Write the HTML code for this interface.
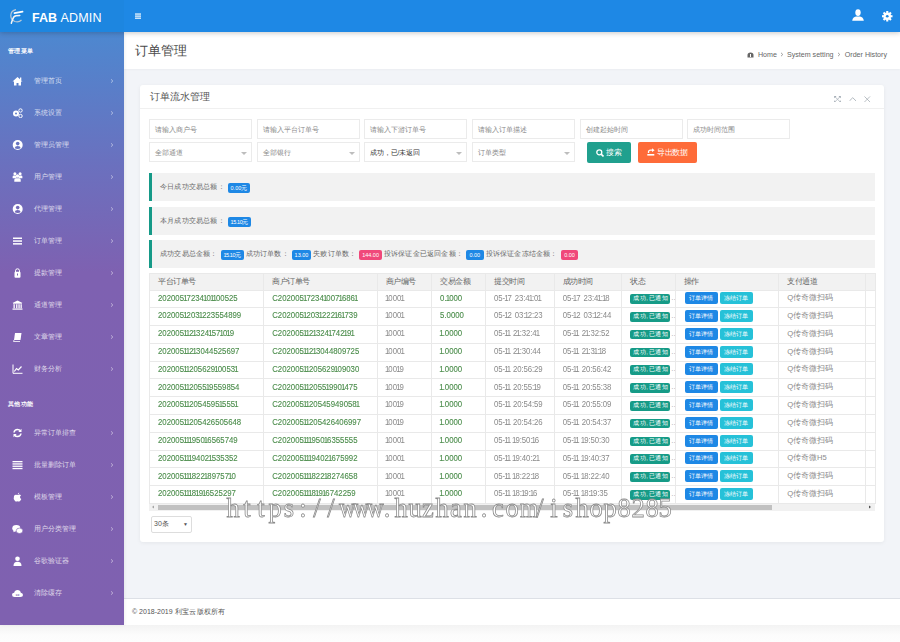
<!DOCTYPE html>
<html><head><meta charset="utf-8">
<style>
*{margin:0;padding:0;box-sizing:border-box}
html,body{width:900px;height:642px;overflow:hidden;background:#fff;font-family:"Liberation Sans",sans-serif;}
#hdr{position:absolute;left:0;top:0;width:900px;height:32.4px;background:#1e88e5;box-shadow:0 1px 5px rgba(0,0,0,.22);z-index:5}
#logo{position:absolute;left:0;top:0;width:124px;height:32.4px;background:#1d86e0}
#side{position:absolute;left:0;top:32px;width:124px;height:593px;box-shadow:1px 0 3px rgba(0,0,0,.06);background:linear-gradient(to bottom,#4d88d0 0px,#6b70be 135px,#7e61b1 240px,#7f61b0 593px);z-index:3}
#main{position:absolute;left:124px;top:32px;width:776px;height:593px;background:#f2f4f8}
#below{position:absolute;left:0;top:625px;width:900px;height:17px;background:linear-gradient(#f3f3f3,#fcfcfc 60%,#fdfdfd)}
.sh{position:absolute;left:8px;font-size:6px;letter-spacing:.4px;font-weight:bold;color:#fff;line-height:8px;white-space:nowrap}
.it{position:absolute;left:0;width:124px;height:16px;color:rgba(255,255,255,.75);font-size:7px;line-height:16px;white-space:nowrap}
.it .t{position:absolute;left:33.8px;top:0}
.it .ar{position:absolute;left:109px;top:4px;width:6px;height:8px}
.it svg.ic{position:absolute;left:12px;top:3px;width:11px;height:10px}

.pg{position:absolute;white-space:nowrap}
#tbar{position:absolute;left:124px;top:32px;width:776px;height:37px;background:#fff;box-shadow:0 1px 2px rgba(0,0,0,.03)}
#card{position:absolute;left:140px;top:85px;width:744px;height:456.5px;background:#fff;border-radius:3px;box-shadow:0 1px 4px rgba(0,0,0,.06)}
.inp{position:absolute;height:20px;width:103px;border:1px solid #ebebeb;background:#fff;font-size:7px;line-height:19px;color:#888;padding-left:4.5px;white-space:nowrap}
.inp .tri{position:absolute;right:4.5px;top:8.5px;width:0;height:0;border-left:3px solid transparent;border-right:3px solid transparent;border-top:3px solid #bdbdbd}
.btn{position:absolute;height:21px;color:#fff;font-size:8px;letter-spacing:-.4px;line-height:21px;text-align:center;border-radius:2px;white-space:nowrap}
.alert{position:absolute;left:149px;width:726px;background:#f2f2f2;border-left:3px solid #169a88;font-size:7px;letter-spacing:.2px;color:#666;white-space:nowrap}
.alert .in{position:absolute;left:8px;top:0;line-height:28px;height:28px}
.bd{display:inline-block;color:#fff;font-size:5.5px;line-height:10.6px;height:10.6px;padding:0 2.8px;border-radius:2px;vertical-align:top;margin:9.5px 2px 0 3px;letter-spacing:0}
#tbl{position:absolute;left:149px;top:273px;width:726px;border-collapse:collapse;table-layout:fixed}
#tbl td,#tbl th{border:1px solid #e9e9e9;height:17.8px;padding:0 0 0 8px;font-size:7.2px;font-weight:normal;text-align:left;white-space:nowrap;overflow:hidden;color:#8a8a8a}
#tbl th{background:#f2f2f2;color:#666;height:16.5px;font-size:8px;letter-spacing:-.5px}
#tbl td.g{color:#4a8c4a}
#tbl td{font-size:7.8px;letter-spacing:0;padding-bottom:1.5px}
#tbl td.tm{letter-spacing:-.1px}
.sy{display:inline-block;transform:scaleY(1.15);transform-origin:50% 55%}
#tbl td.g .sy{-webkit-text-stroke:.1px currentColor}
.sp{display:inline-block;width:3px}
#tbl td.nc{font-size:7.6px;letter-spacing:0}
.o{font-weight:normal;margin:0 -.9px}
.st{display:inline-block;position:relative;top:0.8px;vertical-align:middle;background:#169b87;color:#fff;font-size:6px;line-height:9.5px;height:9.5px;padding:0 0 0 3px;letter-spacing:.5px;border-radius:2px;width:40px;overflow:hidden}
.ob{display:inline-block;color:#fff;font-size:5.8px;line-height:12px;height:12px;width:33px;text-align:center;border-radius:2px;margin-right:2px;vertical-align:1px;letter-spacing:0}
</style></head><body>
<div id="hdr"><div id="logo">
<svg style="position:absolute;left:6px;top:6px" width="22" height="22" viewBox="0 0 22 22"><path d="M10 3.6 Q5 4.5 4.8 9.5 Q4.8 14 9 15.5 Q13 16.5 15.5 14" stroke="#c9cfd6" stroke-width="1.2" fill="none" opacity=".9"/><path d="M8.4 7.1 L16.6 5.6" stroke="#fff" stroke-width="1.6" stroke-linecap="round"/><path d="M5.3 17.3 Q6.5 13 7.8 11 Q8.6 10 10 9.7 L13.8 9.4" stroke="#f4f6f8" stroke-width="1.5" fill="none" stroke-linecap="round"/></svg>
<div style="position:absolute;left:32px;top:10.5px;font-size:12.5px;line-height:14px;color:#fff;white-space:nowrap"><b>FAB</b> <span style="letter-spacing:.2px">ADMIN</span></div>
</div>
<svg style="position:absolute;left:134.7px;top:13px" width="6.3" height="6.3" viewBox="0 0 7 6"><rect x="0" y="0" width="7" height="1.3" fill="#fff"/><rect x="0" y="2.3" width="7" height="1.3" fill="#fff"/><rect x="0" y="4.6" width="7" height="1.3" fill="#fff"/></svg>
<svg style="position:absolute;left:852px;top:9px" width="12" height="12" viewBox="0 0 12 12"><ellipse cx="6" cy="3.6" rx="2.7" ry="3.4" fill="#fff"/><path d="M0.2 11.8 Q0.8 8.2 4 7.6 L8 7.6 Q11.2 8.2 11.8 11.8 Z" fill="#fff"/></svg>
<svg style="position:absolute;left:882px;top:11px" width="10.5" height="10.5" viewBox="0 0 10 10"><g fill="#fff"><circle cx="5" cy="5" r="3.6"/><rect x="4" y="0" width="2" height="10"/><rect x="0" y="4" width="10" height="2"/><rect x="4" y="0" width="2" height="10" transform="rotate(45 5 5)"/><rect x="4" y="0" width="2" height="10" transform="rotate(-45 5 5)"/></g><circle cx="5" cy="5" r="1.3" fill="#1e88e5"/></svg>
</div>
<div id="side"><div class="sh" style="top:15px">管理菜单</div><div class="sh" style="top:368px">其他功能</div><div class="it" style="top:41px"><svg class="ic" viewBox="0 0 11 10"><path d="M5.5 1 L10.5 5.5 L9 5.5 L9 9.5 L6.5 9.5 L6.5 7 L4.5 7 L4.5 9.5 L2 9.5 L2 5.5 L0.5 5.5 Z" fill="#fff"/><rect x="8" y="1.5" width="1.3" height="2.5" fill="#fff"/></svg><span class="t">管理首页</span><svg class="ar" viewBox="0 0 6 8"><path d="M2 2.3 L3.8 4 L2 5.7" stroke="rgba(255,255,255,.55)" stroke-width="0.9" fill="none"/></svg></div><div class="it" style="top:73px"><svg class="ic" viewBox="0 0 11 10"><circle cx="4" cy="5.5" r="3" fill="#fff"/><circle cx="4" cy="5.5" r="1" fill="#6080c8"/><circle cx="8.5" cy="2.5" r="1.7" fill="none" stroke="#fff" stroke-width="1"/><circle cx="8.5" cy="8" r="1.7" fill="none" stroke="#fff" stroke-width="1"/></svg><span class="t">系统设置</span><svg class="ar" viewBox="0 0 6 8"><path d="M2 2.3 L3.8 4 L2 5.7" stroke="rgba(255,255,255,.55)" stroke-width="0.9" fill="none"/></svg></div><div class="it" style="top:105px"><svg class="ic" viewBox="0 0 11 10"><mask id="mk145"><rect width="11" height="10" fill="#fff"/><circle cx="5.7" cy="3.6" r="1.8" fill="#000"/><path d="M2.7 8.3 Q2.9 6.1 5.7 6.1 Q8.5 6.1 8.7 8.3 Q5.7 9.6 2.7 8.3Z" fill="#000"/></mask><circle cx="5.7" cy="5" r="5" fill="#fff" mask="url(#mk145)"/></svg><span class="t">管理员管理</span><svg class="ar" viewBox="0 0 6 8"><path d="M2 2.3 L3.8 4 L2 5.7" stroke="rgba(255,255,255,.55)" stroke-width="0.9" fill="none"/></svg></div><div class="it" style="top:137px"><svg class="ic" viewBox="0 0 11 10"><g fill="#fff"><circle cx="2.9" cy="1.8" r="1.5"/><circle cx="8.1" cy="1.8" r="1.5"/><path d="M0.6 6.3 L0.6 4.8 Q0.6 3.5 2 3.5 L3.8 3.5 L4.6 6.3Z"/><path d="M10.4 6.3 L10.4 4.8 Q10.4 3.5 9 3.5 L7.2 3.5 L6.4 6.3Z"/><circle cx="5.5" cy="4" r="1.7"/><path d="M2.3 9.8 L2.3 7.8 Q2.3 6.2 4 6.2 L7 6.2 Q8.7 6.2 8.7 7.8 L8.7 9.8Z"/></g></svg><span class="t">用户管理</span><svg class="ar" viewBox="0 0 6 8"><path d="M2 2.3 L3.8 4 L2 5.7" stroke="rgba(255,255,255,.55)" stroke-width="0.9" fill="none"/></svg></div><div class="it" style="top:169px"><svg class="ic" viewBox="0 0 11 10"><mask id="mk209"><rect width="11" height="10" fill="#fff"/><circle cx="5.7" cy="3.6" r="1.8" fill="#000"/><path d="M2.7 8.3 Q2.9 6.1 5.7 6.1 Q8.5 6.1 8.7 8.3 Q5.7 9.6 2.7 8.3Z" fill="#000"/></mask><circle cx="5.7" cy="5" r="5" fill="#fff" mask="url(#mk209)"/></svg><span class="t">代理管理</span><svg class="ar" viewBox="0 0 6 8"><path d="M2 2.3 L3.8 4 L2 5.7" stroke="rgba(255,255,255,.55)" stroke-width="0.9" fill="none"/></svg></div><div class="it" style="top:201px"><svg class="ic" viewBox="0 0 11 10"><rect x="1" y="1.5" width="9" height="1.5" fill="#fff"/><rect x="1" y="4.3" width="9" height="1.5" fill="#fff"/><rect x="1" y="7.1" width="9" height="1.5" fill="#fff"/></svg><span class="t">订单管理</span><svg class="ar" viewBox="0 0 6 8"><path d="M2 2.3 L3.8 4 L2 5.7" stroke="rgba(255,255,255,.55)" stroke-width="0.9" fill="none"/></svg></div><div class="it" style="top:233px"><svg class="ic" viewBox="0 0 11 10"><path d="M3.5 4 L3.5 2.8 Q3.5 0.8 5.5 0.8 Q7.5 0.8 7.5 2.8 L7.5 4" stroke="#fff" stroke-width="1" fill="none"/><rect x="2.5" y="3.8" width="6" height="6" rx="1" fill="#fff"/><rect x="5" y="5.5" width="1" height="2" fill="#7a63b3"/></svg><span class="t">提款管理</span><svg class="ar" viewBox="0 0 6 8"><path d="M2 2.3 L3.8 4 L2 5.7" stroke="rgba(255,255,255,.55)" stroke-width="0.9" fill="none"/></svg></div><div class="it" style="top:265px"><svg class="ic" viewBox="0 0 11 10"><path d="M5.5 0.5 L10.5 3 L0.5 3 Z" fill="#fff"/><rect x="1" y="3.3" width="9" height="0.8" fill="#fff"/><rect x="1.5" y="4.3" width="1.3" height="4" fill="#fff"/><rect x="4.1" y="4.3" width="1.3" height="4" fill="#fff"/><rect x="6.4" y="4.3" width="1.3" height="4" fill="#fff"/><rect x="8.5" y="4.3" width="1.3" height="4" fill="#fff"/><rect x="0.5" y="8.5" width="10" height="1.2" fill="#fff"/></svg><span class="t">通道管理</span><svg class="ar" viewBox="0 0 6 8"><path d="M2 2.3 L3.8 4 L2 5.7" stroke="rgba(255,255,255,.55)" stroke-width="0.9" fill="none"/></svg></div><div class="it" style="top:297px"><svg class="ic" viewBox="0 0 11 10"><path d="M3 1 L9.5 1 L8.5 8 L2 8 Z" fill="#fff"/><path d="M2 8 L1.5 9.5 L8 9.5" stroke="#fff" stroke-width="0.8" fill="none"/></svg><span class="t">文章管理</span><svg class="ar" viewBox="0 0 6 8"><path d="M2 2.3 L3.8 4 L2 5.7" stroke="rgba(255,255,255,.55)" stroke-width="0.9" fill="none"/></svg></div><div class="it" style="top:329px"><svg class="ic" viewBox="0 0 11 10"><path d="M1 0.5 L1 9.3 L10.5 9.3" stroke="#fff" stroke-width="1" fill="none"/><path d="M2.3 7.5 L4.5 4.5 L6.3 6 L9.5 2.5" stroke="#fff" stroke-width="1.2" fill="none"/></svg><span class="t">财务分析</span><svg class="ar" viewBox="0 0 6 8"><path d="M2 2.3 L3.8 4 L2 5.7" stroke="rgba(255,255,255,.55)" stroke-width="0.9" fill="none"/></svg></div><div class="it" style="top:393px"><svg class="ic" viewBox="0 0 11 10"><path d="M2 4.5 Q2.5 1.5 5.5 1.5 Q7.5 1.5 8.5 3" stroke="#fff" stroke-width="1.5" fill="none"/><path d="M9.5 0.8 L9.5 4 L6.3 4Z" fill="#fff"/><path d="M9 5.5 Q8.5 8.5 5.5 8.5 Q3.5 8.5 2.5 7" stroke="#fff" stroke-width="1.5" fill="none"/><path d="M1.5 9.2 L1.5 6 L4.7 6Z" fill="#fff"/></svg><span class="t">异常订单排查</span><svg class="ar" viewBox="0 0 6 8"><path d="M2 2.3 L3.8 4 L2 5.7" stroke="rgba(255,255,255,.55)" stroke-width="0.9" fill="none"/></svg></div><div class="it" style="top:425px"><svg class="ic" viewBox="0 0 11 10"><rect x="0.5" y="1" width="10" height="1.3" fill="#fff"/><rect x="0.5" y="3.3" width="10" height="1.3" fill="#fff"/><rect x="0.5" y="5.6" width="10" height="1.3" fill="#fff"/><rect x="0.5" y="7.9" width="10" height="1.3" fill="#fff"/></svg><span class="t">批量删除订单</span><svg class="ar" viewBox="0 0 6 8"><path d="M2 2.3 L3.8 4 L2 5.7" stroke="rgba(255,255,255,.55)" stroke-width="0.9" fill="none"/></svg></div><div class="it" style="top:457px"><svg class="ic" viewBox="0 0 11 10"><path d="M5.5 3 Q3 2 2 4 Q1 6.5 3 9 Q4 10 5.5 9.3 Q7 10 8 9 Q9 8 9.3 7 Q8 6.3 8 5 Q8 4 9 3.5 Q8 2 5.5 3Z" fill="#fff"/><path d="M5.5 2.5 Q6 0.8 7.3 0.5 Q7.2 2 5.5 2.5Z" fill="#fff"/></svg><span class="t">模板管理</span><svg class="ar" viewBox="0 0 6 8"><path d="M2 2.3 L3.8 4 L2 5.7" stroke="rgba(255,255,255,.55)" stroke-width="0.9" fill="none"/></svg></div><div class="it" style="top:489px"><svg class="ic" viewBox="0 0 11 10"><ellipse cx="4.3" cy="4.3" rx="4" ry="3.3" fill="#fff"/><path d="M1.8 6.5 L1.3 8.2 L3.5 7.2Z" fill="#fff"/><ellipse cx="7.5" cy="6.8" rx="3.3" ry="2.7" fill="#fff" stroke="#7e60b0" stroke-width="0.6"/></svg><span class="t">用户分类管理</span><svg class="ar" viewBox="0 0 6 8"><path d="M2 2.3 L3.8 4 L2 5.7" stroke="rgba(255,255,255,.55)" stroke-width="0.9" fill="none"/></svg></div><div class="it" style="top:521px"><svg class="ic" viewBox="0 0 11 10"><circle cx="5.5" cy="2.8" r="2.3" fill="#fff"/><path d="M1.5 10 Q1.5 5.8 5.5 5.8 Q9.5 5.8 9.5 10Z" fill="#fff"/></svg><span class="t">谷歌验证器</span><svg class="ar" viewBox="0 0 6 8"><path d="M2 2.3 L3.8 4 L2 5.7" stroke="rgba(255,255,255,.55)" stroke-width="0.9" fill="none"/></svg></div><div class="it" style="top:553px"><svg class="ic" viewBox="0 0 11 10"><path d="M2.5 9 Q0 9 0 6.8 Q0 4.8 2.2 4.8 Q2.8 2 5.5 2 Q8.3 2 8.8 4.8 Q11 5 11 7 Q11 9 8.5 9Z" fill="#fff"/><text x="5.5" y="7.8" font-size="3" text-anchor="middle" fill="#7e60b0" font-family="Liberation Sans" font-weight="bold">co</text></svg><span class="t">清除缓存</span><svg class="ar" viewBox="0 0 6 8"><path d="M2 2.3 L3.8 4 L2 5.7" stroke="rgba(255,255,255,.55)" stroke-width="0.9" fill="none"/></svg></div></div>
<div id="main"></div><div id="tbar"></div>
<div class="pg" style="left:135px;top:43px;font-size:13px;line-height:16px;color:#4a4a4a">订单管理</div>
<svg class="pg" style="left:747px;top:52px" width="7" height="6" viewBox="0 0 7 6"><path d="M0.5 5.5 L0.5 3 Q0.5 0.5 3.5 0.5 Q6.5 0.5 6.5 3 L6.5 5.5Z" fill="#666"/><rect x="3" y="2" width="1" height="3" fill="#fff"/></svg>
<div class="pg" style="left:758px;top:51px;font-size:7.1px;line-height:9px;color:#666">Home</div>
<div class="pg" style="left:787px;top:51px;font-size:7.1px;line-height:9px;color:#666">System setting</div>
<div class="pg" style="left:844.8px;top:51px;font-size:7.1px;line-height:9px;color:#666">Order History</div>
<svg class="pg" style="left:779.8px;top:52px" width="4" height="5" viewBox="0 0 4 5"><path d="M1 0.8 L2.8 2.5 L1 4.2" stroke="#888" stroke-width="0.8" fill="none"/></svg>
<svg class="pg" style="left:837px;top:52px" width="4" height="5" viewBox="0 0 4 5"><path d="M1 0.8 L2.8 2.5 L1 4.2" stroke="#888" stroke-width="0.8" fill="none"/></svg>
<div id="card"></div>
<div class="pg" style="left:150px;top:91px;font-size:9.6px;line-height:12px;color:#555">订单流水管理</div>
<div class="pg" style="left:140px;top:108px;width:744px;height:1px;background:#f0f0f0"></div>
<svg class="pg" style="left:834px;top:95.5px" width="7" height="6.5" viewBox="0 0 7 7"><path d="M1 1 L6 6 M6 1 L1 6" stroke="#a9b1b9" stroke-width="0.8"/><path d="M0 0 L2.4 0 L0 2.4Z M7 0 L4.6 0 L7 2.4Z M0 7 L2.4 7 L0 4.6Z M7 7 L4.6 7 L7 4.6Z" fill="#98a2ac"/></svg>
<svg class="pg" style="left:848.5px;top:96.5px" width="7.5" height="4.5" viewBox="0 0 7.5 4.5"><path d="M0.4 4 L3.75 0.7 L7.1 4" stroke="#a9b1b9" stroke-width="0.9" fill="none"/></svg>
<svg class="pg" style="left:864px;top:96px" width="6.5" height="6.5" viewBox="0 0 7 7"><path d="M0.5 0.5 L6.5 6.5 M6.5 0.5 L0.5 6.5" stroke="#a0a8b0" stroke-width="0.8"/></svg>
<div class="inp" style="left:149px;top:119px">请输入商户号</div>
<div class="inp" style="left:257px;top:119px">请输入平台订单号</div>
<div class="inp" style="left:364px;top:119px">请输入下游订单号</div>
<div class="inp" style="left:472px;top:119px">请输入订单描述</div>
<div class="inp" style="left:580px;top:119px">创建起始时间</div>
<div class="inp" style="left:687px;top:119px">成功时间范围</div>
<div class="inp" style="left:149px;top:142px;color:#888">全部通道<span class="tri"></span></div>
<div class="inp" style="left:257px;top:142px;color:#888">全部银行<span class="tri"></span></div>
<div class="inp" style="left:364px;top:142px;color:#333">成功，已/未返回<span class="tri"></span></div>
<div class="inp" style="left:472px;top:142px;color:#888">订单类型<span class="tri"></span></div>
<div class="btn" style="left:587px;top:142px;width:44px;background:#20a08e"><svg style="vertical-align:-1.5px;margin-right:2px" width="8" height="8" viewBox="0 0 8 8"><circle cx="3.3" cy="3.3" r="2.5" stroke="#fff" stroke-width="1.3" fill="none"/><path d="M5.1 5.1 L7.5 7.5" stroke="#fff" stroke-width="1.6"/></svg>搜索</div>
<div class="btn" style="left:638px;top:142px;width:59px;background:#fe6b39"><svg style="vertical-align:-1px;margin-right:2px" width="8" height="8" viewBox="0 0 8 8"><path d="M1.5 5 L1.5 4 Q1.5 2.2 3.5 2.2 L5.5 2.2" stroke="#fff" stroke-width="1.3" fill="none"/><path d="M5 0.3 L7.6 2.2 L5 4.1Z" fill="#fff"/><rect x="0.3" y="6" width="7" height="1.6" fill="#fff"/></svg>导出数据</div>
<div class="alert" style="top:173px;height:28px"><div class="in" style="top:0">今日成功交易总额：<span class="bd" style="background:#1e88e5">0.00元</span></div></div>
<div class="alert" style="top:207px;height:28px"><div class="in">本月成功交易总额：<span class="bd" style="background:#1e88e5;letter-spacing:-.4px">15.10元</span></div></div>
<div class="alert" style="top:240px;height:28px"><div class="in">成功交易总金额：<span class="bd" style="background:#1e88e5;letter-spacing:-.4px">15.10元</span>成功订单数：<span class="bd" style="background:#1e88e5">13.00</span>失败订单数：<span class="bd" style="background:#f0487a">144.00</span>投诉保证金已返回金额：<span class="bd" style="background:#1e88e5;padding:0 3.5px">0.00</span>投诉保证金冻结金额：<span class="bd" style="background:#f0487a;padding:0 3.5px">0.00</span></div></div>
<table id="tbl"><colgroup><col style="width:114.2px"><col style="width:113.6px"><col style="width:54.3px"><col style="width:54px"><col style="width:68.7px"><col style="width:67.6px"><col style="width:53.5px"><col style="width:103.3px"><col style="width:87px"><col style="width:9.8px"></colgroup><tr><th>平台订单号</th><th>商户订单号</th><th>商户编号</th><th>交易金额</th><th>提交时间</th><th>成功时间</th><th>状态</th><th>操作</th><th>支付通道</th><th></th></tr><tr><td class="g"><span class="sy">202005<b class="o">1</b>7234<b class="o">1</b>0<b class="o">1</b><b class="o">1</b>00525</span></td><td class="g"><span class="sy">C202005<b class="o">1</b>7234<b class="o">1</b>007<b class="o">1</b>686<b class="o">1</b></span></td><td><span class="sy"><b class="o">1</b>000<b class="o">1</b></span></td><td class="g"><span class="sy">0.<b class="o">1</b>000</span></td><td class="tm"><span class="sy">05-<b class="o">1</b>7<i class="sp"></i>23:4<b class="o">1</b>:0<b class="o">1</b></span></td><td class="tm"><span class="sy">05-<b class="o">1</b>7<i class="sp"></i>23:4<b class="o">1</b>:<b class="o">1</b>8</span></td><td><span class="st">成功,已通知</span><span style="position:relative;top:0px;margin-left:1px;color:#aaa">..</span></td><td style="padding-left:9px"><span class="ob" style="background:#1e88e5">订单详情</span><span class="ob" style="background:#26c1d8">冻结订单</span></td><td class="nc">Q传奇微扫码</td><td></td></tr><tr><td class="g"><span class="sy">202005<b class="o">1</b>203<b class="o">1</b>223554899</span></td><td class="g"><span class="sy">C202005<b class="o">1</b>203<b class="o">1</b>222<b class="o">1</b>6<b class="o">1</b>739</span></td><td><span class="sy"><b class="o">1</b>000<b class="o">1</b></span></td><td class="g"><span class="sy">5.0000</span></td><td class="tm"><span class="sy">05-<b class="o">1</b>2<i class="sp"></i>03:<b class="o">1</b>2:23</span></td><td class="tm"><span class="sy">05-<b class="o">1</b>2<i class="sp"></i>03:<b class="o">1</b>2:44</span></td><td><span class="st">成功,已通知</span><span style="position:relative;top:0px;margin-left:1px;color:#aaa">..</span></td><td style="padding-left:9px"><span class="ob" style="background:#1e88e5">订单详情</span><span class="ob" style="background:#26c1d8">冻结订单</span></td><td class="nc">Q传奇微扫码</td><td></td></tr><tr><td class="g"><span class="sy">202005<b class="o">1</b><b class="o">1</b>2<b class="o">1</b>324<b class="o">1</b>57<b class="o">1</b>0<b class="o">1</b>9</span></td><td class="g"><span class="sy">C202005<b class="o">1</b><b class="o">1</b>2<b class="o">1</b>324<b class="o">1</b>742<b class="o">1</b>9<b class="o">1</b></span></td><td><span class="sy"><b class="o">1</b>000<b class="o">1</b></span></td><td class="g"><span class="sy"><b class="o">1</b>.0000</span></td><td class="tm"><span class="sy">05-<b class="o">1</b><b class="o">1</b><i class="sp"></i>2<b class="o">1</b>:32:4<b class="o">1</b></span></td><td class="tm"><span class="sy">05-<b class="o">1</b><b class="o">1</b><i class="sp"></i>2<b class="o">1</b>:32:52</span></td><td><span class="st">成功,已通知</span><span style="position:relative;top:0px;margin-left:1px;color:#aaa">..</span></td><td style="padding-left:9px"><span class="ob" style="background:#1e88e5">订单详情</span><span class="ob" style="background:#26c1d8">冻结订单</span></td><td class="nc">Q传奇微扫码</td><td></td></tr><tr><td class="g"><span class="sy">202005<b class="o">1</b><b class="o">1</b>2<b class="o">1</b>3044525697</span></td><td class="g"><span class="sy">C202005<b class="o">1</b><b class="o">1</b>2<b class="o">1</b>3044809725</span></td><td><span class="sy"><b class="o">1</b>000<b class="o">1</b></span></td><td class="g"><span class="sy"><b class="o">1</b>.0000</span></td><td class="tm"><span class="sy">05-<b class="o">1</b><b class="o">1</b><i class="sp"></i>2<b class="o">1</b>:30:44</span></td><td class="tm"><span class="sy">05-<b class="o">1</b><b class="o">1</b><i class="sp"></i>2<b class="o">1</b>:3<b class="o">1</b>:<b class="o">1</b>8</span></td><td><span class="st">成功,已通知</span><span style="position:relative;top:0px;margin-left:1px;color:#aaa">..</span></td><td style="padding-left:9px"><span class="ob" style="background:#1e88e5">订单详情</span><span class="ob" style="background:#26c1d8">冻结订单</span></td><td class="nc">Q传奇微扫码</td><td></td></tr><tr><td class="g"><span class="sy">202005<b class="o">1</b><b class="o">1</b>205629<b class="o">1</b>0053<b class="o">1</b></span></td><td class="g"><span class="sy">C202005<b class="o">1</b><b class="o">1</b>205629<b class="o">1</b>09030</span></td><td><span class="sy"><b class="o">1</b>00<b class="o">1</b>9</span></td><td class="g"><span class="sy"><b class="o">1</b>.0000</span></td><td class="tm"><span class="sy">05-<b class="o">1</b><b class="o">1</b><i class="sp"></i>20:56:29</span></td><td class="tm"><span class="sy">05-<b class="o">1</b><b class="o">1</b><i class="sp"></i>20:56:42</span></td><td><span class="st">成功,已通知</span><span style="position:relative;top:0px;margin-left:1px;color:#aaa">..</span></td><td style="padding-left:9px"><span class="ob" style="background:#1e88e5">订单详情</span><span class="ob" style="background:#26c1d8">冻结订单</span></td><td class="nc">Q传奇微扫码</td><td></td></tr><tr><td class="g"><span class="sy">202005<b class="o">1</b><b class="o">1</b>2055<b class="o">1</b>9559854</span></td><td class="g"><span class="sy">C202005<b class="o">1</b><b class="o">1</b>2055<b class="o">1</b>990<b class="o">1</b>475</span></td><td><span class="sy"><b class="o">1</b>00<b class="o">1</b>9</span></td><td class="g"><span class="sy"><b class="o">1</b>.0000</span></td><td class="tm"><span class="sy">05-<b class="o">1</b><b class="o">1</b><i class="sp"></i>20:55:<b class="o">1</b>9</span></td><td class="tm"><span class="sy">05-<b class="o">1</b><b class="o">1</b><i class="sp"></i>20:55:38</span></td><td><span class="st">成功,已通知</span><span style="position:relative;top:0px;margin-left:1px;color:#aaa">..</span></td><td style="padding-left:9px"><span class="ob" style="background:#1e88e5">订单详情</span><span class="ob" style="background:#26c1d8">冻结订单</span></td><td class="nc">Q传奇微扫码</td><td></td></tr><tr><td class="g"><span class="sy">202005<b class="o">1</b><b class="o">1</b>2054595<b class="o">1</b>555<b class="o">1</b></span></td><td class="g"><span class="sy">C202005<b class="o">1</b><b class="o">1</b>20545949058<b class="o">1</b></span></td><td><span class="sy"><b class="o">1</b>00<b class="o">1</b>9</span></td><td class="g"><span class="sy"><b class="o">1</b>.0000</span></td><td class="tm"><span class="sy">05-<b class="o">1</b><b class="o">1</b><i class="sp"></i>20:54:59</span></td><td class="tm"><span class="sy">05-<b class="o">1</b><b class="o">1</b><i class="sp"></i>20:55:09</span></td><td><span class="st">成功,已通知</span><span style="position:relative;top:0px;margin-left:1px;color:#aaa">..</span></td><td style="padding-left:9px"><span class="ob" style="background:#1e88e5">订单详情</span><span class="ob" style="background:#26c1d8">冻结订单</span></td><td class="nc">Q传奇微扫码</td><td></td></tr><tr><td class="g"><span class="sy">202005<b class="o">1</b><b class="o">1</b>205426505648</span></td><td class="g"><span class="sy">C202005<b class="o">1</b><b class="o">1</b>205426406997</span></td><td><span class="sy"><b class="o">1</b>00<b class="o">1</b>9</span></td><td class="g"><span class="sy"><b class="o">1</b>.0000</span></td><td class="tm"><span class="sy">05-<b class="o">1</b><b class="o">1</b><i class="sp"></i>20:54:26</span></td><td class="tm"><span class="sy">05-<b class="o">1</b><b class="o">1</b><i class="sp"></i>20:54:37</span></td><td><span class="st">成功,已通知</span><span style="position:relative;top:0px;margin-left:1px;color:#aaa">..</span></td><td style="padding-left:9px"><span class="ob" style="background:#1e88e5">订单详情</span><span class="ob" style="background:#26c1d8">冻结订单</span></td><td class="nc">Q传奇微扫码</td><td></td></tr><tr><td class="g"><span class="sy">202005<b class="o">1</b><b class="o">1</b><b class="o">1</b>950<b class="o">1</b>6565749</span></td><td class="g"><span class="sy">C202005<b class="o">1</b><b class="o">1</b><b class="o">1</b>950<b class="o">1</b>6355555</span></td><td><span class="sy"><b class="o">1</b>000<b class="o">1</b></span></td><td class="g"><span class="sy"><b class="o">1</b>.0000</span></td><td class="tm"><span class="sy">05-<b class="o">1</b><b class="o">1</b><i class="sp"></i><b class="o">1</b>9:50:<b class="o">1</b>6</span></td><td class="tm"><span class="sy">05-<b class="o">1</b><b class="o">1</b><i class="sp"></i><b class="o">1</b>9:50:30</span></td><td><span class="st">成功,已通知</span><span style="position:relative;top:0px;margin-left:1px;color:#aaa">..</span></td><td style="padding-left:9px"><span class="ob" style="background:#1e88e5">订单详情</span><span class="ob" style="background:#26c1d8">冻结订单</span></td><td class="nc">Q传奇微扫码</td><td></td></tr><tr><td class="g"><span class="sy">202005<b class="o">1</b><b class="o">1</b><b class="o">1</b>9402<b class="o">1</b>535352</span></td><td class="g"><span class="sy">C202005<b class="o">1</b><b class="o">1</b><b class="o">1</b>9402<b class="o">1</b>675992</span></td><td><span class="sy"><b class="o">1</b>000<b class="o">1</b></span></td><td class="g"><span class="sy"><b class="o">1</b>.0000</span></td><td class="tm"><span class="sy">05-<b class="o">1</b><b class="o">1</b><i class="sp"></i><b class="o">1</b>9:40:2<b class="o">1</b></span></td><td class="tm"><span class="sy">05-<b class="o">1</b><b class="o">1</b><i class="sp"></i><b class="o">1</b>9:40:37</span></td><td><span class="st">成功,已通知</span><span style="position:relative;top:0px;margin-left:1px;color:#aaa">..</span></td><td style="padding-left:9px"><span class="ob" style="background:#1e88e5">订单详情</span><span class="ob" style="background:#26c1d8">冻结订单</span></td><td class="nc">Q传奇微H5</td><td></td></tr><tr><td class="g"><span class="sy">202005<b class="o">1</b><b class="o">1</b><b class="o">1</b>822<b class="o">1</b>89757<b class="o">1</b>0</span></td><td class="g"><span class="sy">C202005<b class="o">1</b><b class="o">1</b><b class="o">1</b>822<b class="o">1</b>8274658</span></td><td><span class="sy"><b class="o">1</b>000<b class="o">1</b></span></td><td class="g"><span class="sy"><b class="o">1</b>.0000</span></td><td class="tm"><span class="sy">05-<b class="o">1</b><b class="o">1</b><i class="sp"></i><b class="o">1</b>8:22:<b class="o">1</b>8</span></td><td class="tm"><span class="sy">05-<b class="o">1</b><b class="o">1</b><i class="sp"></i><b class="o">1</b>8:22:40</span></td><td><span class="st">成功,已通知</span><span style="position:relative;top:0px;margin-left:1px;color:#aaa">..</span></td><td style="padding-left:9px"><span class="ob" style="background:#1e88e5">订单详情</span><span class="ob" style="background:#26c1d8">冻结订单</span></td><td class="nc">Q传奇微扫码</td><td></td></tr><tr><td class="g"><span class="sy">202005<b class="o">1</b><b class="o">1</b><b class="o">1</b>8<b class="o">1</b>9<b class="o">1</b>6525297</span></td><td class="g"><span class="sy">C202005<b class="o">1</b><b class="o">1</b><b class="o">1</b>8<b class="o">1</b>9<b class="o">1</b>6742259</span></td><td><span class="sy"><b class="o">1</b>000<b class="o">1</b></span></td><td class="g"><span class="sy"><b class="o">1</b>.0000</span></td><td class="tm"><span class="sy">05-<b class="o">1</b><b class="o">1</b><i class="sp"></i><b class="o">1</b>8:<b class="o">1</b>9:<b class="o">1</b>6</span></td><td class="tm"><span class="sy">05-<b class="o">1</b><b class="o">1</b><i class="sp"></i><b class="o">1</b>8:<b class="o">1</b>9:35</span></td><td><span class="st">成功,已通知</span><span style="position:relative;top:0px;margin-left:1px;color:#aaa">..</span></td><td style="padding-left:9px"><span class="ob" style="background:#1e88e5">订单详情</span><span class="ob" style="background:#26c1d8">冻结订单</span></td><td class="nc">Q传奇微扫码</td><td></td></tr></table>
<div class="pg" style="left:149px;top:503.5px;width:726px;height:7px;background:#f1f1f1"></div>
<div class="pg" style="left:158px;top:504.5px;width:614px;height:5px;background:#c1c1c1"></div>
<svg class="pg" style="left:151px;top:505px" width="4" height="4" viewBox="0 0 4 4"><path d="M3 0.5 L1 2 L3 3.5Z" fill="#a3a3a3"/></svg>
<svg class="pg" style="left:868px;top:505px" width="4" height="4" viewBox="0 0 4 4"><path d="M1 0.5 L3 2 L1 3.5Z" fill="#505050"/></svg>
<div class="pg" style="left:151px;top:516px;width:40.5px;height:16.5px;border:1px solid #ddd;border-radius:2px;background:#fff;font-size:7px;line-height:14.5px;color:#555;padding-left:2px">30条<span style="position:absolute;left:31px;top:0;font-size:5px">▼</span></div>
<div class="pg" style="left:124px;top:598px;width:776px;height:27px;background:#fff;border-top:1px solid #dde0e6"></div>
<div class="pg" style="left:132px;top:607px;font-size:7px;line-height:9px;color:#555">© 2018-2019 利宝云 版权所有</div>
<div class="pg" style="left:0;top:0;z-index:9"><span style="position:absolute;left:226.30px;top:491px;width:14px;text-align:center;font-family:'Liberation Serif',serif;font-size:27.3px;line-height:34px;color:#fff;-webkit-text-stroke:0.8px #8c8c8c;transform:scaleX(0.97)">h</span><span style="position:absolute;left:240.24px;top:491px;width:14px;text-align:center;font-family:'Liberation Serif',serif;font-size:27.3px;line-height:34px;color:#fff;-webkit-text-stroke:0.8px #8c8c8c;transform:scaleX(0.97)">t</span><span style="position:absolute;left:254.18px;top:491px;width:14px;text-align:center;font-family:'Liberation Serif',serif;font-size:27.3px;line-height:34px;color:#fff;-webkit-text-stroke:0.8px #8c8c8c;transform:scaleX(0.97)">t</span><span style="position:absolute;left:268.12px;top:491px;width:14px;text-align:center;font-family:'Liberation Serif',serif;font-size:27.3px;line-height:34px;color:#fff;-webkit-text-stroke:0.8px #8c8c8c;transform:scaleX(0.97)">p</span><span style="position:absolute;left:282.06px;top:491px;width:14px;text-align:center;font-family:'Liberation Serif',serif;font-size:27.3px;line-height:34px;color:#fff;-webkit-text-stroke:0.8px #8c8c8c;transform:scaleX(0.97)">s</span><span style="position:absolute;left:296.00px;top:491px;width:14px;text-align:center;font-family:'Liberation Serif',serif;font-size:27.3px;line-height:34px;color:#fff;-webkit-text-stroke:0.8px #8c8c8c;transform:scaleX(0.97)">:</span><span style="position:absolute;left:309.94px;top:491px;width:14px;text-align:center;font-family:'Liberation Serif',serif;font-size:27.3px;line-height:34px;color:#fff;-webkit-text-stroke:0.8px #8c8c8c;transform:scaleX(0.97)">/</span><span style="position:absolute;left:323.88px;top:491px;width:14px;text-align:center;font-family:'Liberation Serif',serif;font-size:27.3px;line-height:34px;color:#fff;-webkit-text-stroke:0.8px #8c8c8c;transform:scaleX(0.97)">/</span><span style="position:absolute;left:337.82px;top:491px;width:14px;text-align:center;font-family:'Liberation Serif',serif;font-size:27.3px;line-height:34px;color:#fff;-webkit-text-stroke:0.8px #8c8c8c;transform:scaleX(0.85)">w</span><span style="position:absolute;left:351.76px;top:491px;width:14px;text-align:center;font-family:'Liberation Serif',serif;font-size:27.3px;line-height:34px;color:#fff;-webkit-text-stroke:0.8px #8c8c8c;transform:scaleX(0.85)">w</span><span style="position:absolute;left:365.70px;top:491px;width:14px;text-align:center;font-family:'Liberation Serif',serif;font-size:27.3px;line-height:34px;color:#fff;-webkit-text-stroke:0.8px #8c8c8c;transform:scaleX(0.85)">w</span><span style="position:absolute;left:379.64px;top:491px;width:14px;text-align:center;font-family:'Liberation Serif',serif;font-size:27.3px;line-height:34px;color:#fff;-webkit-text-stroke:0.8px #8c8c8c;transform:scaleX(0.97)">.</span><span style="position:absolute;left:393.58px;top:491px;width:14px;text-align:center;font-family:'Liberation Serif',serif;font-size:27.3px;line-height:34px;color:#fff;-webkit-text-stroke:0.8px #8c8c8c;transform:scaleX(0.97)">h</span><span style="position:absolute;left:407.52px;top:491px;width:14px;text-align:center;font-family:'Liberation Serif',serif;font-size:27.3px;line-height:34px;color:#fff;-webkit-text-stroke:0.8px #8c8c8c;transform:scaleX(0.97)">u</span><span style="position:absolute;left:421.46px;top:491px;width:14px;text-align:center;font-family:'Liberation Serif',serif;font-size:27.3px;line-height:34px;color:#fff;-webkit-text-stroke:0.8px #8c8c8c;transform:scaleX(0.97)">z</span><span style="position:absolute;left:435.40px;top:491px;width:14px;text-align:center;font-family:'Liberation Serif',serif;font-size:27.3px;line-height:34px;color:#fff;-webkit-text-stroke:0.8px #8c8c8c;transform:scaleX(0.97)">h</span><span style="position:absolute;left:449.34px;top:491px;width:14px;text-align:center;font-family:'Liberation Serif',serif;font-size:27.3px;line-height:34px;color:#fff;-webkit-text-stroke:0.8px #8c8c8c;transform:scaleX(0.97)">a</span><span style="position:absolute;left:463.28px;top:491px;width:14px;text-align:center;font-family:'Liberation Serif',serif;font-size:27.3px;line-height:34px;color:#fff;-webkit-text-stroke:0.8px #8c8c8c;transform:scaleX(0.97)">n</span><span style="position:absolute;left:477.22px;top:491px;width:14px;text-align:center;font-family:'Liberation Serif',serif;font-size:27.3px;line-height:34px;color:#fff;-webkit-text-stroke:0.8px #8c8c8c;transform:scaleX(0.97)">.</span><span style="position:absolute;left:491.16px;top:491px;width:14px;text-align:center;font-family:'Liberation Serif',serif;font-size:27.3px;line-height:34px;color:#fff;-webkit-text-stroke:0.8px #8c8c8c;transform:scaleX(0.97)">c</span><span style="position:absolute;left:505.10px;top:491px;width:14px;text-align:center;font-family:'Liberation Serif',serif;font-size:27.3px;line-height:34px;color:#fff;-webkit-text-stroke:0.8px #8c8c8c;transform:scaleX(0.97)">o</span><span style="position:absolute;left:519.04px;top:491px;width:14px;text-align:center;font-family:'Liberation Serif',serif;font-size:27.3px;line-height:34px;color:#fff;-webkit-text-stroke:0.8px #8c8c8c;transform:scaleX(0.85)">m</span><span style="position:absolute;left:532.98px;top:491px;width:14px;text-align:center;font-family:'Liberation Serif',serif;font-size:27.3px;line-height:34px;color:#fff;-webkit-text-stroke:0.8px #8c8c8c;transform:scaleX(0.97)">/</span><span style="position:absolute;left:546.92px;top:491px;width:14px;text-align:center;font-family:'Liberation Serif',serif;font-size:27.3px;line-height:34px;color:#fff;-webkit-text-stroke:0.8px #8c8c8c;transform:scaleX(0.97)">i</span><span style="position:absolute;left:560.86px;top:491px;width:14px;text-align:center;font-family:'Liberation Serif',serif;font-size:27.3px;line-height:34px;color:#fff;-webkit-text-stroke:0.8px #8c8c8c;transform:scaleX(0.97)">s</span><span style="position:absolute;left:574.80px;top:491px;width:14px;text-align:center;font-family:'Liberation Serif',serif;font-size:27.3px;line-height:34px;color:#fff;-webkit-text-stroke:0.8px #8c8c8c;transform:scaleX(0.97)">h</span><span style="position:absolute;left:588.74px;top:491px;width:14px;text-align:center;font-family:'Liberation Serif',serif;font-size:27.3px;line-height:34px;color:#fff;-webkit-text-stroke:0.8px #8c8c8c;transform:scaleX(0.97)">o</span><span style="position:absolute;left:602.68px;top:491px;width:14px;text-align:center;font-family:'Liberation Serif',serif;font-size:27.3px;line-height:34px;color:#fff;-webkit-text-stroke:0.8px #8c8c8c;transform:scaleX(0.97)">p</span><span style="position:absolute;left:616.62px;top:491px;width:14px;text-align:center;font-family:'Liberation Serif',serif;font-size:27.3px;line-height:34px;color:#fff;-webkit-text-stroke:0.8px #8c8c8c;transform:scaleX(0.97)">8</span><span style="position:absolute;left:630.56px;top:491px;width:14px;text-align:center;font-family:'Liberation Serif',serif;font-size:27.3px;line-height:34px;color:#fff;-webkit-text-stroke:0.8px #8c8c8c;transform:scaleX(0.97)">2</span><span style="position:absolute;left:644.50px;top:491px;width:14px;text-align:center;font-family:'Liberation Serif',serif;font-size:27.3px;line-height:34px;color:#fff;-webkit-text-stroke:0.8px #8c8c8c;transform:scaleX(0.97)">8</span><span style="position:absolute;left:658.44px;top:491px;width:14px;text-align:center;font-family:'Liberation Serif',serif;font-size:27.3px;line-height:34px;color:#fff;-webkit-text-stroke:0.8px #8c8c8c;transform:scaleX(0.97)">5</span></div>
<div id="below"></div>
</body></html>
